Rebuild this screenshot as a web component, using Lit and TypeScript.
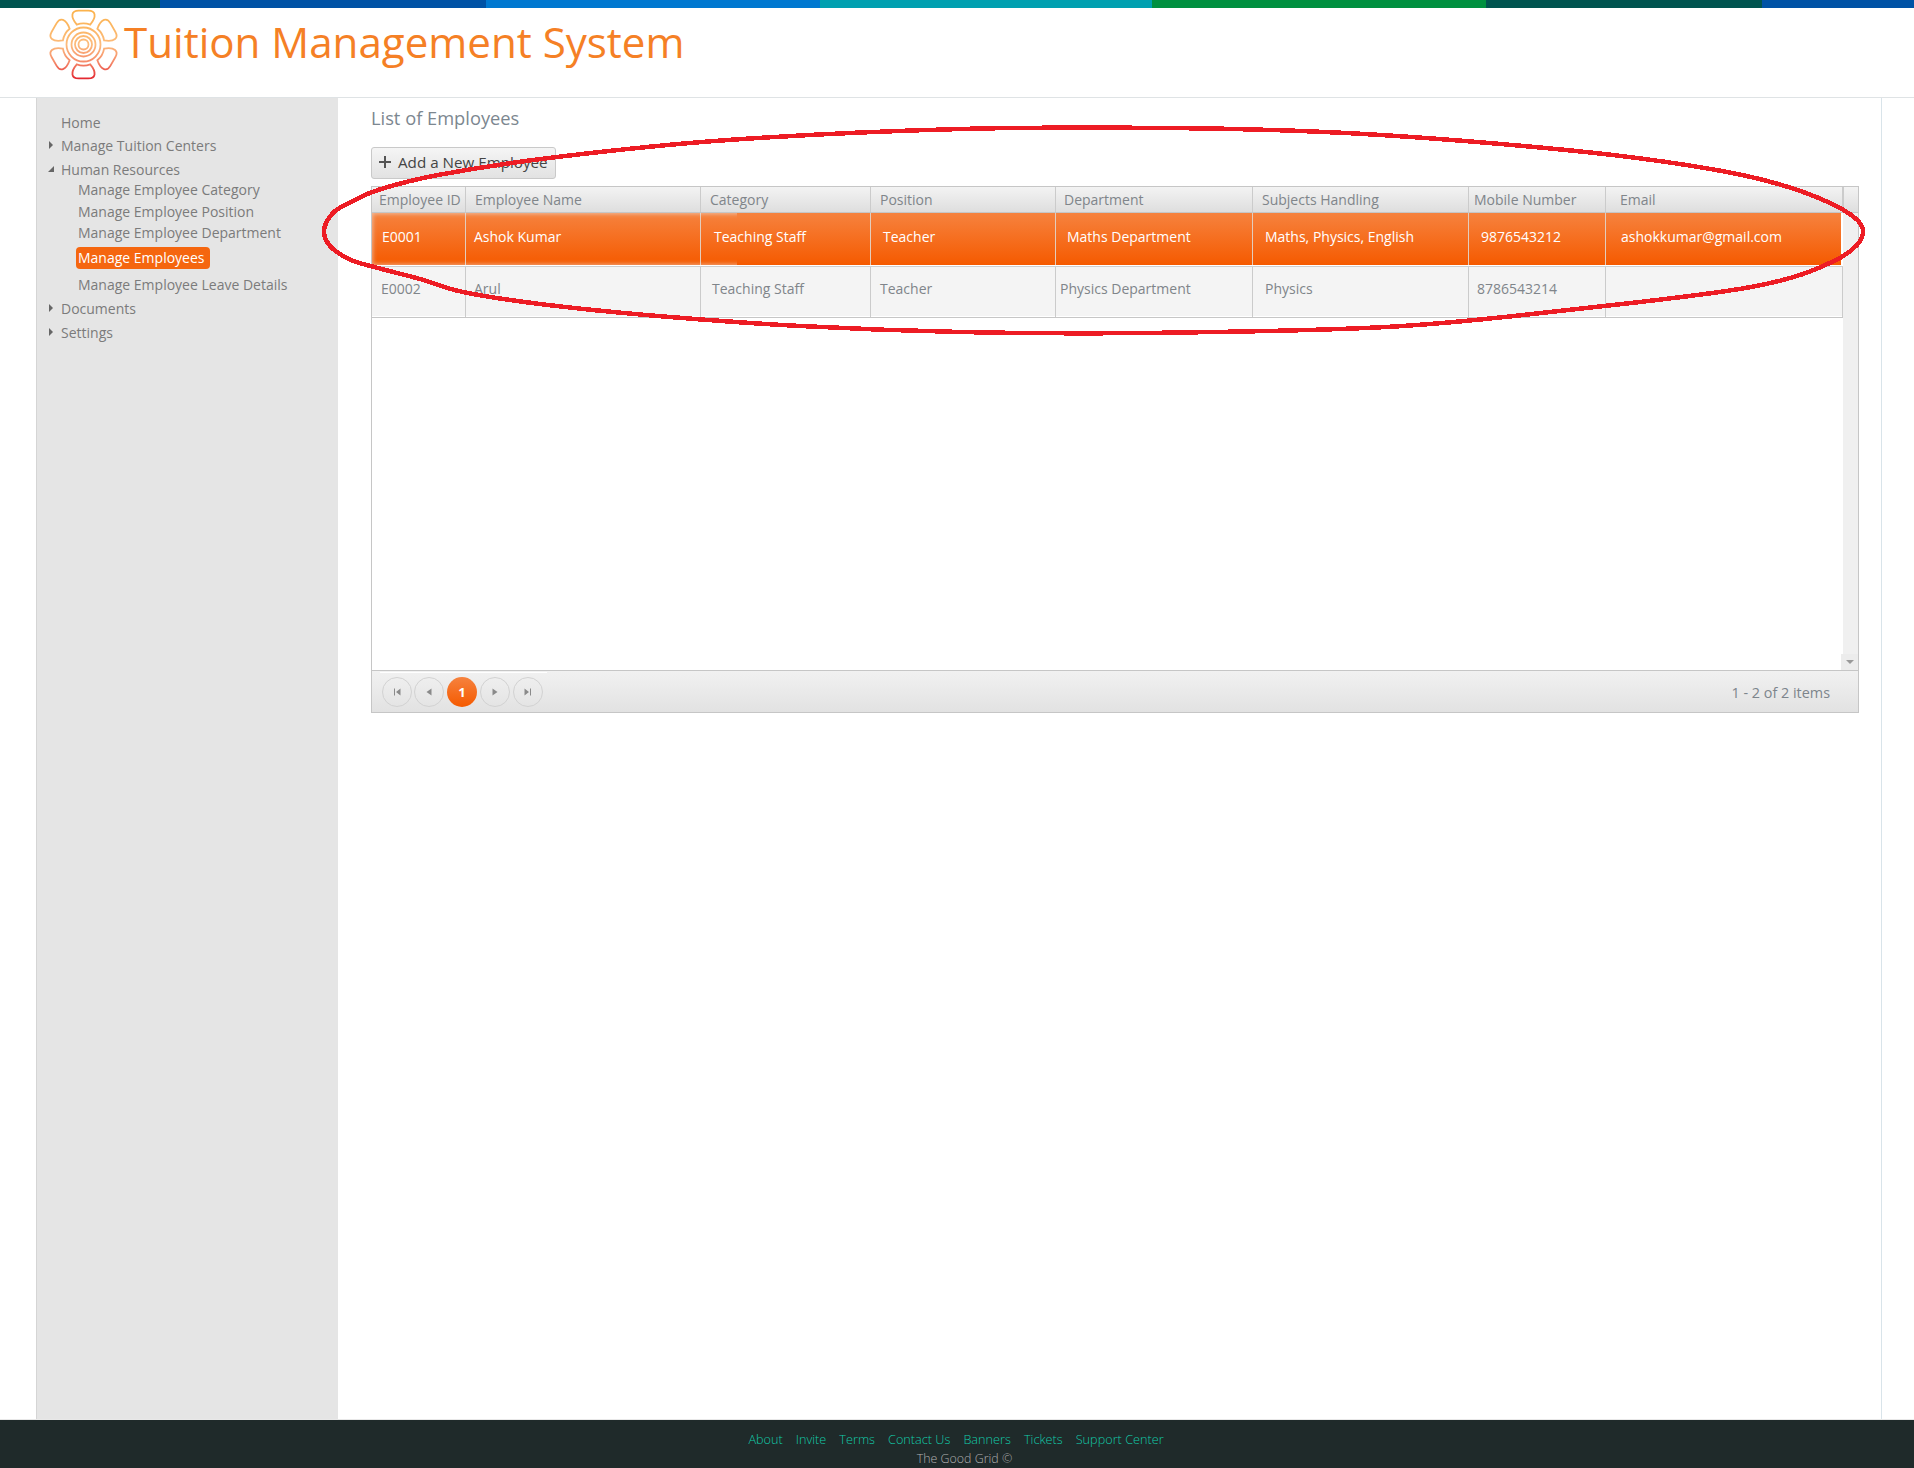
import { LitElement, html, css, svg } from "lit";
import { customElement } from "lit/decorators.js";

const BAR = [
  [160, "#00544f"], [326, "#0052a5"], [334, "#0078d0"], [332, "#00a0b0"],
  [334, "#009040"], [276, "#00544f"], [152, "#0052a5"],
] as [number, string][];

const COLS = [94, 235, 170, 185, 197, 216, 137, 237];

const HEAD: [string, number][] = [
  ["Employee ID", 7], ["Employee Name", 9], ["Category", 9], ["Position", 9],
  ["Department", 8], ["Subjects Handling", 9], ["Mobile Number", 5], ["Email", 14],
];
const ROW1: [string, number][] = [
  ["E0001", 10], ["Ashok Kumar", 8], ["Teaching Staff", 13], ["Teacher", 12],
  ["Maths Department", 11], ["Maths, Physics, English", 12], ["9876543212", 12], ["ashokkumar@gmail.com", 15],
];
const ROW2: [string, number][] = [
  ["E0002", 9], ["Arul", 8], ["Teaching Staff", 11], ["Teacher", 9],
  ["Physics Department", 4], ["Physics", 12], ["8786543214", 8], ["", 0],
];

const NAV: { t: string; lvl: number; m: number; arrow?: "r" | "d"; active?: boolean }[] = [
  { t: "Home", lvl: 1, m: 0 },
  { t: "Manage Tuition Centers", lvl: 1, m: 3, arrow: "r" },
  { t: "Human Resources", lvl: 1, m: 4, arrow: "d" },
  { t: "Manage Employee Category", lvl: 2, m: 0 },
  { t: "Manage Employee Position", lvl: 2, m: 2 },
  { t: "Manage Employee Department", lvl: 2, m: 1 },
  { t: "Manage Employees", lvl: 2, m: 6, active: true },
  { t: "Manage Employee Leave Details", lvl: 2, m: 6 },
  { t: "Documents", lvl: 1, m: 4, arrow: "r" },
  { t: "Settings", lvl: 1, m: 4, arrow: "r" },
];

const FOOT = ["About", "Invite", "Terms", "Contact Us", "Banners", "Tickets", "Support Center"];

function rot(x: number, y: number, a: number): string {
  const r = (a * Math.PI) / 180;
  const X = 42.5 + x * Math.cos(r) - y * Math.sin(r);
  const Y = 44.5 + x * Math.sin(r) + y * Math.cos(r);
  return `${X.toFixed(2)} ${Y.toFixed(2)}`;
}
function petal(a: number): string {
  const p = (x: number, y: number) => rot(x * 0.96, y * 0.97, a);
  return `M${p(-7, -20.5)} C${p(-10, -24)} ${p(-12, -28)} ${p(-11.5, -31)} C${p(-11, -34)} ${p(-8, -35)} ${p(-5, -35)} L${p(5, -35)} C${p(8, -35)} ${p(11, -34)} ${p(11.5, -31)} C${p(12, -28)} ${p(10, -24)} ${p(7, -20.5)} C${p(3, -22)} ${p(-3, -22)} ${p(-7, -20.5)}Z`;
}

const logo = svg`
  <defs>
    <linearGradient id="lg" gradientUnits="userSpaceOnUse" x1="0" y1="9" x2="0" y2="80">
      <stop offset="0" stop-color="#fbb24a"/>
      <stop offset="0.5" stop-color="#fcbb7c"/>
      <stop offset="0.75" stop-color="#f58a6a"/>
      <stop offset="1" stop-color="#e2202c"/>
    </linearGradient>
  </defs>
  <g fill="none" stroke="url(#lg)" stroke-width="1.8">
    ${[0, 60, 120, 180, 240, 300].map((a) => svg`<path d=${petal(a)}/>`)}
    <circle cx="42.5" cy="44.5" r="17"/>
    <circle cx="42.5" cy="44.5" r="12"/>
    <circle cx="42.5" cy="44.5" r="8.5"/>
    <circle cx="42.5" cy="44.5" r="5"/>
  </g>`;

/* The hand-drawn ring: points read from the reference, joined by a closed Catmull-Rom curve. */
const RING: [number, number][] = [
  [324, 231], [333, 213], [351, 202], [378, 190], [438, 175], [557, 157], [728, 140], [960, 129], [1170, 128],
  [1325, 132], [1477, 142], [1629, 157], [1751, 177], [1830, 203], [1863, 230], [1836, 260],
  [1751, 287], [1568, 310], [1386, 327], [1142, 333], [960, 332], [800, 326], [646, 315], [540, 304], [463, 292],
  [420, 279], [378, 268], [351, 260], [331, 247],
];
function ringPath(): string {
  const n = RING.length;
  let d = `M${RING[0][0]} ${RING[0][1]}`;
  for (let i = 0; i < n; i++) {
    const p0 = RING[(i - 1 + n) % n], p1 = RING[i], p2 = RING[(i + 1) % n], p3 = RING[(i + 2) % n];
    const c1x = p1[0] + (p2[0] - p0[0]) / 6, c1y = p1[1] + (p2[1] - p0[1]) / 6;
    const c2x = p2[0] - (p3[0] - p1[0]) / 6, c2y = p2[1] - (p3[1] - p1[1]) / 6;
    d += ` C${c1x.toFixed(1)} ${c1y.toFixed(1)} ${c2x.toFixed(1)} ${c2y.toFixed(1)} ${p2[0]} ${p2[1]}`;
  }
  return d + "Z";
}

@customElement("app-root")
export class AppRoot extends LitElement {
  static styles = css`
    :host { display: block; position: relative; height: 1468px; width: 1914px; overflow: hidden;
      background: #fff; font-family: "Open Sans", "Noto Sans", sans-serif; }
    .page { display: flex; flex-direction: column; height: 100%; }
    .bar { display: flex; height: 8px; flex: none; }
    .head { height: 89px; flex: none; border-bottom: 1px solid #dfe3e5; display: flex; align-items: flex-start; padding-left: 41px; }
    .logo { width: 82px; height: 89px; margin-top: -8px; flex: none; }
    .title { font-size: 42.1px; line-height: 58px; color: #f58025; margin-left: 1px; margin-top: 5px; white-space: nowrap; }
    .body { flex: 1; display: flex; min-height: 0; }
    .side { margin-left: 36px; flex: none; background: #e5e5e5; border-left: 1px solid #d5d5d5; box-sizing: border-box; width: 302px; padding-top: 14px; }
    .nav { display: flex; align-items: center; height: 20px; font-size: 14px; color: #7b7b7b; white-space: nowrap; position: relative; }
    .l1 { padding-left: 24px; }
    .l2 { padding-left: 41px; }
    .arrow { position: absolute; left: 12px; top: 6px; width: 0; height: 0; }
    .arrow.r { border-left: 4px solid #666; border-top: 4px solid transparent; border-bottom: 4px solid transparent; }
    .arrow.d { border-bottom: 6px solid #666; border-left: 6px solid transparent; top: 7px; left: 11px; }
    .pill { background: #f5660f; color: #fff; border-radius: 4px; padding: 0 5px 0 2px; line-height: 22px; height: 22px; margin-left: -2px; }
    .main { flex: none; width: 1544px; border-right: 1px solid #d9e4ea; box-sizing: border-box; padding: 7px 23px 0 33px; }
    h1 { margin: 0; font-size: 18.3px; font-weight: 400; line-height: 26px; color: #7c8790; }
    .btn { margin-top: 16px; width: 185px; height: 32px; box-sizing: border-box; border: 1px solid #c9c9c9; border-radius: 3px;
      background: linear-gradient(#f5f5f5, #e2e2e2); display: flex; align-items: center; gap: 6px; padding: 0 0 2px 6px; font-size: 15.2px; color: #444; white-space: nowrap; }
    .grid { margin-top: 7px; width: 1488px; box-sizing: border-box; border: 1px solid #c6c6c6; height: 527px; display: flex; flex-direction: column; }
    .rows { height: 483px; flex: none; display: flex; position: relative; }
    .rowsin { flex: none; width: 1471px; display: flex; flex-direction: column; }
    .scroll { flex: 1; background: #f0f0f0; position: relative; }
    .scroll::before { content: ""; display: block; height: 25px; background: linear-gradient(#f3f3f3, #dedede); border-bottom: 1px solid #c6c6c6; border-left: 1px solid #cbcbcb; }
    .down { position: absolute; right: 0; bottom: 0; width: 17px; height: 16px; background: #ececec; display: flex; align-items: center; justify-content: center; }
    .down i { width: 0; height: 0; border-top: 4px solid #999; border-left: 4px solid transparent; border-right: 4px solid transparent; }
    .tr { display: flex; flex: none; }
    .th { height: 25px; background: linear-gradient(#f3f3f3, #dedede); border-bottom: 1px solid #c6c6c6; }
    .th .c { padding-bottom: 1px; }
    .sel { height: 52px; background: linear-gradient(#f6823e, #f55a00); color: #fff; width: 1469px; position: relative; overflow: hidden; }
    .sel::after { content: ""; position: absolute; left: 0; top: 0; bottom: 0; width: 372px; box-shadow: inset 0 0 4px 1px rgba(235, 235, 235, 0.55); clip-path: inset(0 7px 0 0); }
    .sel .c { color: #fff; border-right-color: #e3cdbd; padding-bottom: 6px; }
    .alt { background: #f4f4f4; border-top: 1px solid #cfcfcf; border-bottom: 1px solid #c6c6c6; box-shadow: inset 0 -1px 0 #fff; margin-top: 1px; box-sizing: border-box; height: 52px; }
    .alt .c { padding-bottom: 7px; }
    .c { flex: none; box-sizing: border-box; display: flex; align-items: center; font-size: 14px; white-space: nowrap; border-right: 1px solid #cbcbcb; overflow: hidden; }
    .th .c, .alt .c { color: #80858a; }
    .pager { flex: 1; background: linear-gradient(#f1f1f1, #e2e2e2); border-top: 1px solid #c6c6c6; display: flex; align-items: center; padding: 1px 0 0 10px; gap: 3px; position: relative; }
    .pager::before { content: ""; position: absolute; left: 8px; top: 1px; width: 167px; height: 1px; background: #fff; }
    .pb { width: 30px; height: 30px; box-sizing: border-box; border: 1px solid #d2d2d2; border-radius: 50%; display: flex; align-items: center; justify-content: center; }
    .pb.prev { margin-left: -1px; }
    .pb svg { width: 12px; height: 12px; }
    .pb.on { background: linear-gradient(#f6823e, #f55a00); border: 0; color: #fff; font-size: 13px; font-weight: 700; }
    .count { margin-left: auto; margin-right: 28px; color: #7d858c; font-size: 14.4px; }
    .foot { height: 49px; flex: none; background: #1f2a2a; border-top: 1px solid #e8e8e8; box-sizing: border-box; display: flex; flex-direction: column; align-items: center; font-weight: 300; font-size: 12.7px; }
    .links { display: flex; gap: 13px; color: #12c9a8; line-height: 20px; margin-top: 9px; margin-right: 2px; }
    .copy { color: #b0b0b0; line-height: 20px; font-size: 12.4px; margin-left: 15px; }
    .oval { position: absolute; left: 0; top: 0; width: 1914px; height: 1468px; pointer-events: none; }
  `;

  private cells(row: [string, number][]) {
    return row.map(([t, p], i) => html`<div class="c" style="width:${COLS[i]}px;padding-left:${p}px">${t}</div>`);
  }

  render() {
    return html`
      <div class="page">
        <div class="bar">${BAR.map(([w, c]) => html`<div style="width:${w}px;background:${c}"></div>`)}</div>
        <div class="head">
          <svg class="logo" viewBox="0 0 82 89">${logo}</svg>
          <div class="title">Tuition Management System</div>
        </div>
        <div class="body">
          <div class="side">
            ${NAV.map((n) => html`<div class="nav ${n.lvl === 1 ? "l1" : "l2"}" style="margin-top:${n.m}px">
              ${n.arrow ? html`<span class="arrow ${n.arrow}"></span>` : ""}
              ${n.active ? html`<span class="pill">${n.t}</span>` : n.t}
            </div>`)}
          </div>
          <div class="main">
            <h1>List of Employees</h1>
            <div class="btn">
              <svg width="14" height="14" viewBox="0 0 14 14"><path d="M7 1v12M1 7h12" stroke="#555" stroke-width="2" fill="none"/></svg>
              <span>Add a New Employee</span>
            </div>
            <div class="grid">
              <div class="rows">
                <div class="rowsin">
                  <div class="tr th">${this.cells(HEAD)}</div>
                  <div class="tr sel">${this.cells(ROW1)}</div>
                  <div class="tr alt">${this.cells(ROW2)}</div>
                </div>
                <div class="scroll"><div class="down"><i></i></div></div>
              </div>
              <div class="pager">
                <div class="pb"><svg viewBox="0 0 12 12"><path d="M3 2.5v7h1v-7zM9.5 2.5v7L5 6z" fill="#8a8a8a"/></svg></div>
                <div class="pb prev"><svg viewBox="0 0 12 12"><path d="M8.5 2.5v7L3.5 6z" fill="#8a8a8a"/></svg></div>
                <div class="pb on">1</div>
                <div class="pb"><svg viewBox="0 0 12 12"><path d="M3.5 2.5v7L8.5 6z" fill="#8a8a8a"/></svg></div>
                <div class="pb"><svg viewBox="0 0 12 12"><path d="M2.5 2.5v7L7 6zM8 2.5v7h1v-7z" fill="#8a8a8a"/></svg></div>
                <div class="count">1 - 2 of 2 items</div>
              </div>
            </div>
          </div>
        </div>
        <div class="foot">
          <div class="links">${FOOT.map((f) => html`<span>${f}</span>`)}</div>
          <div class="copy">The Good Grid ©</div>
        </div>
      </div>
      <svg class="oval" viewBox="0 0 1914 1468">
        <path d=${ringPath()} fill="none" stroke="#ed1c24" stroke-width="4.5" shape-rendering="crispEdges"/>
      </svg>
    `;
  }
}
